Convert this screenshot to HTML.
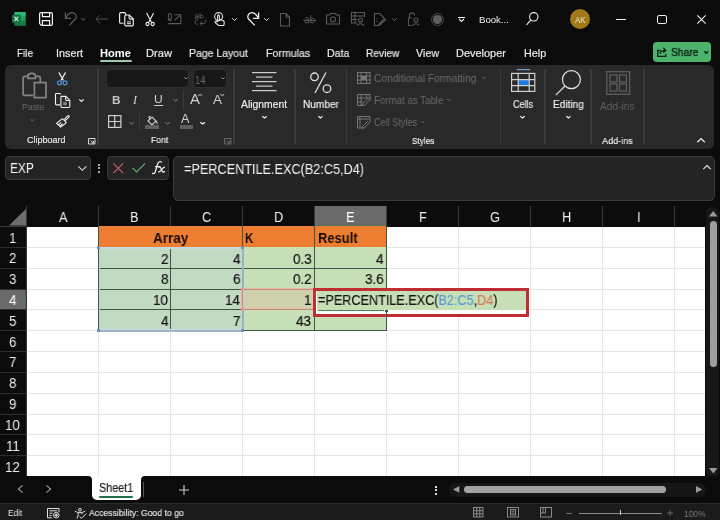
<!DOCTYPE html>
<html><head><meta charset="utf-8">
<style>
*{margin:0;padding:0;box-sizing:border-box}
html,body{width:720px;height:520px;overflow:hidden;background:#0b0b0b;font-family:"Liberation Sans",sans-serif;color:#fff}
.a{position:absolute}
.t{position:absolute;white-space:nowrap;line-height:1;will-change:transform}
svg{position:absolute;overflow:visible}
</style></head><body>
<!-- ============ TITLE BAR ============ -->
<div id="title">
  <!-- excel logo -->
  <svg style="left:11.8px;top:12.2px" width="14" height="14" viewBox="0 0 14 14">
    <rect x="2.6" y="0" width="11" height="13.5" rx="0.8" fill="#1f9e5e"/>
    <rect x="2.6" y="0" width="11" height="4.5" fill="#2cb874"/>
    <rect x="2.6" y="9" width="11" height="4.5" fill="#177a45"/>
    <rect x="0" y="2.8" width="8.7" height="8" rx="0.8" fill="#137040"/>
    <path d="M2.4 4.6 L6.3 9.1 M6.3 4.6 L2.4 9.1" stroke="#d9f2e2" stroke-width="1.1"/>
  </svg>
  <!-- save -->
  <svg style="left:39px;top:12px" width="14" height="14" viewBox="0 0 14 14" fill="none" stroke="#f2f2f2" stroke-width="1.2">
    <path d="M1.8 0.6 H12 C12.8 0.6 13.4 1.2 13.4 2 V12.2 C13.4 13 12.8 13.4 12 13.4 H2.4 L0.6 11.6 V1.8 C0.6 1.1 1.1 0.6 1.8 0.6 Z"/>
    <path d="M3.4 0.6 V4.6 H10.6 V0.6"/>
    <path d="M3.4 13.4 V8.6 H10.6 V13.4"/>
  </svg>
  <!-- undo -->
  <svg style="left:64px;top:12px" width="13" height="14" viewBox="0 0 13 14" fill="none" stroke="#5e5e5e" stroke-width="1.2">
    <path d="M5.3 13.4 L11.4 7 C12.8 5.4 12.3 2.6 10.2 1.3 C7.8 -0.1 4.6 0.7 1.8 5.6"/>
    <path d="M1.4 0.6 V6.4 H7"/>
  </svg>
  <svg style="left:81px;top:17.5px" width="4.5" height="2.6" viewBox="0 0 4.5 2.6" fill="none" stroke="#6a6a6a" stroke-width="1"><path d="M0.3 0.3 L2.25 2.2 L4.2 0.3"/></svg>
  <!-- back arrow -->
  <svg style="left:95px;top:13.5px" width="13" height="10" viewBox="0 0 13 10" fill="none" stroke="#585858" stroke-width="0.95">
    <path d="M13 5 H1 M5 0.8 L0.8 5 L5 9.2"/>
  </svg>
  <!-- copy -->
  <svg style="left:118.5px;top:12px" width="15" height="14.5" viewBox="0 0 15 14.5" fill="none" stroke="#f0f0f0" stroke-width="1.15">
    <path d="M4.6 11.2 H1.9 C1.1 11.2 0.6 10.7 0.6 9.9 V1.9 C0.6 1.1 1.1 0.6 1.9 0.6 H5.3 C6.1 0.6 6.7 1.2 6.7 2 V2.9"/>
    <path d="M7 3 H10.3 L14.3 7 V12.7 C14.3 13.4 13.8 13.9 13.1 13.9 H7 C6.3 13.9 5.8 13.4 5.8 12.7 V4.2 C5.8 3.5 6.3 3 7 3 Z"/>
    <path d="M10.1 3.2 V6 C10.1 6.7 10.5 7.1 11.2 7.1 H14.1"/>
    <path d="M8 9.9 H12 M8 11.7 H12" stroke-width="1"/>
  </svg>
  <!-- scissors -->
  <svg style="left:145px;top:12px" width="10" height="14" viewBox="0 0 10 14" fill="none" stroke="#f0f0f0" stroke-width="1.1">
    <path d="M1.6 0.9 L6.6 10.6 M8.6 0.9 L3.6 10.6"/>
    <circle cx="2.5" cy="12" r="1.6"/><circle cx="7.7" cy="12" r="1.6"/>
  </svg>
  <!-- signature -->
  <svg style="left:167px;top:12.5px" width="14.5" height="11.5" viewBox="0 0 14.5 11.5" fill="none" stroke="#595959" stroke-width="1.1">
    <path d="M1 10.6 H13.8 V1.7 H7.5"/><path d="M7.3 7.3 L13.2 2.3"/>
    <path d="M1.4 6 V2.2 C1.4 0 4.4 0 4.4 2.2 V5.2 C4.4 6.5 2.4 6.8 1.4 6 M1.4 6 C1.4 7.2 2.2 7.8 4.6 7.8"/>
  </svg>
  <!-- abc spelling -->
  <svg style="left:193.5px;top:13px" width="12.5" height="12.5" viewBox="0 0 12.5 12.5" fill="none" stroke="#595959" stroke-width="1">
    <path d="M1 2.5 C1.5 1.2 4 1.2 4 2.8 V5.5 M4 3.8 C2.5 3.5 0.8 3.8 0.8 4.7 C0.8 5.8 3 5.8 4 4.6"/>
    <path d="M6 0 V5.5 M6 3.3 C6.5 2 9.2 2 9.2 3.7 C9.2 5.4 6.5 5.4 6 4"/>
    <path d="M4.2 7.6 C3.5 6.8 1 6.8 1 9.2 C1 11.6 3.5 11.6 4.2 10.8"/>
    <path d="M11.8 6.6 V8 C11.8 9.5 10.5 10.5 9 10.5 H6 M8 8.6 L6 10.5 L8 12.4"/>
  </svg>
  <!-- touch hand -->
  <svg style="left:213.5px;top:12px" width="11" height="14" viewBox="0 0 11 14" fill="none" stroke="#e0e0e0" stroke-width="1.1">
    <circle cx="4.6" cy="4.6" r="4"/>
    <path d="M3.6 10 V4 C3.6 2.8 5.4 2.8 5.4 4 V7.5 L8.5 8.3 C10 8.8 10.5 10 10.2 11.5 L9.8 13.5 H4.5 L1.2 10.5 C0.5 9.7 1.5 8.6 2.4 9.2 L3.6 10"/>
  </svg>
  <svg style="left:232px;top:17.5px" width="5" height="3" viewBox="0 0 5 3" fill="none" stroke="#ddd" stroke-width="1"><path d="M0.3 0.3 L2.5 2.5 L4.7 0.3"/></svg>
  <!-- redo -->
  <svg style="left:247px;top:12px" width="13" height="14" viewBox="0 0 13 14" fill="none" stroke="#f0f0f0" stroke-width="1.3">
    <path d="M7.7 13.4 L1.6 7 C0.2 5.4 0.7 2.6 2.8 1.3 C5.2 -0.1 8.4 0.7 11.2 5.6"/>
    <path d="M11.6 0.6 V6.4 H6"/>
  </svg>
  <svg style="left:264px;top:17.5px" width="5" height="3" viewBox="0 0 5 3" fill="none" stroke="#ddd" stroke-width="1"><path d="M0.3 0.3 L2.5 2.5 L4.7 0.3"/></svg>
  <!-- new doc -->
  <svg style="left:280px;top:12.5px" width="10" height="13.5" viewBox="0 0 10 13.5" fill="none" stroke="#5a5a5a" stroke-width="1.1">
    <path d="M0.5 0.5 H6 L9.5 4 V13 H0.5 Z M6 0.5 V4 H9.5"/>
  </svg>
  <!-- strikethrough ab -->
  <svg style="left:302.5px;top:15px" width="14" height="9" viewBox="0 0 14 9" fill="none" stroke="#595959" stroke-width="1">
    <path d="M0 5.3 H13.6"/>
    <path d="M2.2 3.3 C2.6 2.1 5.6 2.1 5.6 3.8 V8.3 M5.6 5.2 C4 4.8 1.8 5 1.8 6.6 C1.8 8.4 4.6 8.4 5.6 7"/>
    <path d="M7.8 0 V8.3 M7.8 4.3 C8.4 2.8 11.6 2.8 11.6 5.5 C11.6 8.3 8.4 8.3 7.8 6.8"/>
  </svg>
  <!-- camera -->
  <svg style="left:326px;top:13px" width="14" height="11.5" viewBox="0 0 14 11.5" fill="none" stroke="#5a5a5a" stroke-width="1.1">
    <path d="M0.5 2 H3.5 L4.5 0.5 H9.5 L10.5 2 H13.5 V11 H0.5 Z"/>
    <circle cx="7" cy="6.5" r="2.5"/>
  </svg>
  <!-- table person -->
  <svg style="left:350.5px;top:12px" width="14" height="14" viewBox="0 0 14 14" fill="none" stroke="#5a5a5a" stroke-width="1.1">
    <path d="M6 11 H0.5 V0.5 H13.5 V5 M0.5 4 H13.5 M4 0.5 V11 M0.5 7.5 H6"/>
    <circle cx="9.5" cy="8" r="2"/><path d="M6.2 13.8 C6.5 11 12.5 11 12.8 13.8"/>
  </svg>
  <!-- doc pen -->
  <svg style="left:374px;top:12.5px" width="12" height="13" viewBox="0 0 12 13" fill="none" stroke="#5a5a5a" stroke-width="1.1">
    <path d="M5 12.5 H0.5 V0.5 H5.5 L10 5"/><path d="M11.5 6.5 L6 12 L4.5 12.5 L5 11 L10.5 5.5 Z"/>
    <path d="M2.5 6 H3.5 M2.5 8.5 H3.5"/>
  </svg>
  <svg style="left:392px;top:17.5px" width="5" height="3" viewBox="0 0 5 3" fill="none" stroke="#666" stroke-width="1"><path d="M0.3 0.3 L2.5 2.5 L4.7 0.3"/></svg>
  <!-- lock person -->
  <svg style="left:407.5px;top:12px" width="12" height="14" viewBox="0 0 12 14" fill="none" stroke="#555" stroke-width="1.1">
    <path d="M1.5 6 V3.5 C1.5 0 6.5 0 6.5 3.5 M4 13.5 H0.5 V6 H4"/>
    <circle cx="8" cy="8" r="2"/><path d="M5 13.8 C5.3 11 10.7 11 11 13.8"/>
  </svg>
  <!-- record -->
  <svg style="left:430.5px;top:12.5px" width="13" height="13" viewBox="0 0 13 13">
    <circle cx="6.5" cy="6.5" r="6" fill="none" stroke="#4a4a4a" stroke-width="1"/>
    <circle cx="6.5" cy="6.5" r="4.6" fill="#5e5e5e"/>
  </svg>
  <!-- customize -->
  <svg style="left:457.5px;top:17px" width="7" height="5" viewBox="0 0 7 5" fill="none" stroke="#f0f0f0" stroke-width="1.1">
    <path d="M0 0.5 H7 M1 2 L3.5 4.5 L6 2"/>
  </svg>
  <!-- search -->
  <svg style="left:526px;top:12px" width="13" height="13.5" viewBox="0 0 13 13.5" fill="none" stroke="#f0f0f0" stroke-width="1.1">
    <circle cx="7.8" cy="4.8" r="4.2"/><path d="M4.8 7.8 L0.5 13"/>
  </svg>
  <!-- avatar -->
  <div class="a" style="left:569.8px;top:8.9px;width:20.6px;height:20.6px;border-radius:50%;background:#a07a18"></div>
  <!-- window controls -->
  <div class="a" style="left:615.5px;top:18.5px;width:10px;height:1px;background:#f0f0f0"></div>
  <div class="a" style="left:657px;top:15px;width:9.5px;height:9px;border:1.2px solid #f0f0f0;border-radius:2px"></div>
  <svg style="left:697px;top:15px" width="9" height="9" viewBox="0 0 9 9" fill="none" stroke="#f0f0f0" stroke-width="1.1"><path d="M0.3 0.3 L8.7 8.7 M8.7 0.3 L0.3 8.7"/></svg>
</div>

<!-- ============ TABS ============ -->
<div class="a" style="left:99.7px;top:60px;width:32px;height:2px;background:#a3c9ad;border-radius:1px"></div>
<!-- share -->
<div class="a" style="left:653px;top:42px;width:58px;height:20px;background:#4cb26c;border-radius:4px"></div>
<svg style="left:657px;top:47px" width="10" height="10" viewBox="0 0 10 10" fill="none" stroke="#0c2413" stroke-width="1.3">
  <path d="M3.5 3.5 H0.7 V9.3 H8.8 V7"/><path d="M3 7 C3.2 4.5 5 3.3 8.5 3.3 M6.3 0.8 L8.8 3.3 L6.3 5.8"/>
</svg>
<svg style="left:704px;top:50.5px" width="4.5" height="3" viewBox="0 0 4.5 3" fill="none" stroke="#0c2413" stroke-width="1.4"><path d="M0.3 0.3 L2.25 2.3 L4.2 0.3"/></svg>

<div class="t" style="left:478.50px;top:15.00px;font-size:9.6px;letter-spacing:0.000px;color:#f0f0f0;transform:scaleX(0.9865);transform-origin:0.00px 0;">Book...</div>
<div class="t" style="left:574.80px;top:15.00px;font-size:9.6px;letter-spacing:0.000px;color:#f5ecd2;transform:scaleX(0.8115);transform-origin:0.00px 0;">AK</div>
<div class="t" style="left:17.00px;top:48.00px;font-size:10.8px;letter-spacing:0.000px;color:#e8e8e8;-webkit-text-stroke:0.2px #e8e8e8;transform:scaleX(0.9202);transform-origin:0.00px 0;">File</div>
<div class="t" style="left:55.50px;top:48.00px;font-size:10.8px;letter-spacing:0.000px;color:#e8e8e8;-webkit-text-stroke:0.2px #e8e8e8;transform:scaleX(1.0000);transform-origin:0.00px 0;">Insert</div>
<div class="t" style="left:146.00px;top:48.00px;font-size:10.8px;letter-spacing:0.000px;color:#e8e8e8;-webkit-text-stroke:0.2px #e8e8e8;transform:scaleX(1.0310);transform-origin:0.00px 0;">Draw</div>
<div class="t" style="left:188.75px;top:48.00px;font-size:10.8px;letter-spacing:0.000px;color:#e8e8e8;-webkit-text-stroke:0.2px #e8e8e8;transform:scaleX(0.9688);transform-origin:0.00px 0;">Page Layout</div>
<div class="t" style="left:265.75px;top:48.00px;font-size:10.8px;letter-spacing:0.000px;color:#e8e8e8;-webkit-text-stroke:0.2px #e8e8e8;transform:scaleX(0.9825);transform-origin:0.00px 0;">Formulas</div>
<div class="t" style="left:327.00px;top:48.00px;font-size:10.8px;letter-spacing:0.000px;color:#e8e8e8;-webkit-text-stroke:0.2px #e8e8e8;transform:scaleX(0.9850);transform-origin:0.00px 0;">Data</div>
<div class="t" style="left:365.50px;top:48.00px;font-size:10.8px;letter-spacing:0.000px;color:#e8e8e8;-webkit-text-stroke:0.2px #e8e8e8;transform:scaleX(0.9457);transform-origin:0.00px 0;">Review</div>
<div class="t" style="left:416.00px;top:48.00px;font-size:10.8px;letter-spacing:0.000px;color:#e8e8e8;-webkit-text-stroke:0.2px #e8e8e8;transform:scaleX(0.9905);transform-origin:0.00px 0;">View</div>
<div class="t" style="left:456.00px;top:48.00px;font-size:10.8px;letter-spacing:0.000px;color:#e8e8e8;-webkit-text-stroke:0.2px #e8e8e8;transform:scaleX(1.0153);transform-origin:0.00px 0;">Developer</div>
<div class="t" style="left:523.75px;top:48.00px;font-size:10.8px;letter-spacing:0.000px;color:#e8e8e8;-webkit-text-stroke:0.2px #e8e8e8;">Help</div>
<div class="t" style="left:100.00px;top:48.00px;font-size:10.8px;letter-spacing:0.000px;color:#fff;font-weight:bold;transform:scaleX(1.0325);transform-origin:0.00px 0;">Home</div>
<div class="t" style="left:670.60px;top:47.00px;font-size:11px;letter-spacing:0.000px;color:#0c2413;-webkit-text-stroke:0.35px #0c2413;transform:scaleX(0.9329);transform-origin:0.00px 0;">Share</div>
<div class="a" style="left:5px;top:65px;width:709px;height:83.5px;background:#292929;border-radius:6px;"></div>
<div class="a" style="left:97.2px;top:68px;width:1.6px;height:77px;background:#3a3a3a;"></div>
<div class="a" style="left:182.7px;top:90px;width:1.6px;height:20px;background:#3a3a3a;"></div>
<div class="a" style="left:138.7px;top:112px;width:1.6px;height:20px;background:#3a3a3a;"></div>
<div class="a" style="left:233.2px;top:68.5px;width:1.6px;height:75.0px;background:#3a3a3a;"></div>
<div class="a" style="left:294.2px;top:68.5px;width:1.6px;height:75.0px;background:#3a3a3a;"></div>
<div class="a" style="left:345.7px;top:68.5px;width:1.6px;height:75.0px;background:#3a3a3a;"></div>
<div class="a" style="left:499.59999999999997px;top:68.5px;width:1.6px;height:75.0px;background:#3a3a3a;"></div>
<div class="a" style="left:544.4000000000001px;top:68.5px;width:1.6px;height:75.0px;background:#3a3a3a;"></div>
<div class="a" style="left:590.2px;top:68.5px;width:1.6px;height:75.0px;background:#3a3a3a;"></div>
<div class="a" style="left:643.4000000000001px;top:68.5px;width:1.6px;height:75.0px;background:#3a3a3a;"></div>
<svg style="left:22px;top:71.5px" width="25" height="26.5" viewBox="0 0 25 26.5" fill="none" stroke="#858585" stroke-width="1.7">
<path d="M11.2 23.4 H3 C1.9 23.4 1.1 22.6 1.1 21.5 V6.3 C1.1 5.2 1.9 4.4 3 4.4 H6"/><path d="M13.4 4.4 H16.4 C17.5 4.4 18.3 5.2 18.3 6.3 V10"/>
<path d="M6 6.3 V3.3 C6 2.6 6.5 2.1 7.2 2.1 H7.9 C8.2 0.6 11.4 0.6 11.6 2.1 H12.3 C13 2.1 13.4 2.6 13.4 3.3 V6.3 Z"/>
<rect x="12.4" y="10.6" width="11.6" height="15"/></svg>
<div class="t" style="left:21.70px;top:102.00px;font-size:9.6px;letter-spacing:0.000px;color:#6a6a6a;transform:scaleX(0.9092);transform-origin:0.00px 0;">Paste</div>
<svg style="left:30px;top:118.7px" width="4.700000000000003" height="2.5" viewBox="0 0 4.700000000000003 2.5" fill="none" stroke="#6a6a6a" stroke-width="1.0"><path d="M0.3 0.3 L2.3500000000000014 2.0 L4.400000000000003 0.3"/></svg>
<svg style="left:57px;top:71.8px" width="10.5" height="13.5" viewBox="0 0 10.5 13.5" fill="none" stroke-width="1.2">
<path d="M1.8 0.4 L6.4 8.4 M8.6 0.4 L4 8.4" stroke="#e8e8e8"/>
<circle cx="2.5" cy="10.8" r="2" stroke="#4f93d8"/><circle cx="8" cy="10.8" r="2" stroke="#4f93d8"/></svg>
<svg style="left:54.5px;top:92.5px" width="15.5" height="15" viewBox="0 0 15.5 15" fill="none" stroke="#f0f0f0" stroke-width="1.1">
<path d="M5.5 1.5 V1.4 C5.5 0.9 5.1 0.5 4.6 0.5 H1.4 C0.9 0.5 0.5 0.9 0.5 1.4 V11 C0.5 11.5 0.9 11.9 1.4 11.9 H5"/>
<path d="M6.8 3.4 H10.8 L14.8 7.4 V13.6 C14.8 14.1 14.4 14.5 13.9 14.5 H6.8 C6.3 14.5 5.9 14.1 5.9 13.6 V4.3 C5.9 3.8 6.3 3.4 6.8 3.4 Z"/>
<path d="M10.6 3.6 V6.6 C10.6 7.1 11 7.5 11.5 7.5 H14.6"/>
<rect x="8.2" y="9.2" width="3.6" height="3" fill="#8a8a8a" stroke="none"/></svg>
<svg style="left:79px;top:99px" width="5" height="3" viewBox="0 0 5 3" fill="none" stroke="#f0f0f0" stroke-width="1.2"><path d="M0.3 0.3 L2.5 2.5 L4.7 0.3"/></svg>
<svg style="left:55.5px;top:115px" width="13.5" height="12.5" viewBox="0 0 13.5 12.5" fill="none" stroke="#f0f0f0" stroke-width="1.1">
<path d="M8.2 4.6 L11.6 0.9 C12 0.5 12.7 0.5 13 0.9 C13.3 1.3 13.2 1.8 12.9 2.1 L9.3 5.6"/><path d="M6.4 3.6 L10.2 7.4 L9 8.8"/>
<path d="M6.4 3.6 L0.6 8.2 L4.6 12 L9 8.8"/><path d="M2.6 9.8 L5.2 7.4 M4.2 11 L6.6 8.8"/></svg>
<div class="t" style="left:26.70px;top:136.00px;font-size:9.0px;letter-spacing:0.000px;color:#f0f0f0;-webkit-text-stroke:0.15px #f0f0f0;transform:scaleX(0.9969);transform-origin:0.00px 0;">Clipboard</div>
<svg style="left:87.5px;top:137.5px" width="7.5" height="6.5" viewBox="0 0 7.5 6.5" fill="none" stroke="#d8d8d8" stroke-width="1">
<path d="M0.5 6 V0.5 H7 V6 Z"/><path d="M2.5 2.5 L5.5 5 M5.5 3 V5 H3.5"/></svg>
<div class="a" style="left:105.7px;top:68.8px;width:83.7px;height:18.8px;background:#171717;border-radius:4px;border:1px solid #303030;"></div>
<svg style="left:183.5px;top:77px" width="4.0" height="2.5" viewBox="0 0 4.0 2.5" fill="none" stroke="#8a8a8a" stroke-width="1.0"><path d="M0.3 0.3 L2.0 2.0 L3.7 0.3"/></svg>
<div class="a" style="left:192.7px;top:68.8px;width:34.6px;height:18.8px;background:#171717;border-radius:4px;border:1px solid #303030;"></div>
<div class="t" style="left:194.60px;top:75.00px;font-size:11.5px;letter-spacing:0.000px;color:#6a6a6a;transform:scaleX(0.8147);transform-origin:0.00px 0;">14</div>
<svg style="left:221px;top:77px" width="4" height="2.5" viewBox="0 0 4 2.5" fill="none" stroke="#8a8a8a" stroke-width="1.0"><path d="M0.3 0.3 L2.0 2.0 L3.7 0.3"/></svg>
<div class="t" style="left:112.00px;top:95.00px;font-size:11.8px;letter-spacing:0.000px;color:#c4c4c4;font-weight:bold;">B</div>
<div class="t" style="left:133.2px;top:93.5px;font-size:12px;font-style:italic;font-family:'Liberation Serif';color:#d0d0d0">I</div>
<div class="t" style="left:154.30px;top:94.00px;font-size:11.5px;letter-spacing:0.000px;color:#d0d0d0;transform:scaleX(1.0507);transform-origin:0.00px 0;">U</div>
<div class="a" style="left:154.3px;top:104.5px;width:8.7px;height:1.1px;background:#d0d0d0;"></div>
<svg style="left:172.8px;top:99.2px" width="4.899999999999977" height="2.5" viewBox="0 0 4.899999999999977 2.5" fill="none" stroke="#8a8a8a" stroke-width="1.0"><path d="M0.3 0.3 L2.4499999999999886 2.0 L4.599999999999977 0.3"/></svg>
<div class="t" style="left:190.00px;top:92.00px;font-size:14.5px;letter-spacing:0.000px;color:#d0d0d0;transform:scaleX(1.0293);transform-origin:0.00px 0;">A</div>
<svg style="left:198px;top:94px" width="4.5" height="2" viewBox="0 0 4.5 2" fill="none" stroke="#d0d0d0" stroke-width="1.0"><path d="M0.3 1.7 L2.25 0.5 L4.2 1.7"/></svg>
<div class="t" style="left:212.70px;top:93.00px;font-size:13px;letter-spacing:0.000px;color:#d0d0d0;transform:scaleX(1.0333);transform-origin:0.00px 0;">A</div>
<svg style="left:220px;top:94px" width="4.5" height="2" viewBox="0 0 4.5 2" fill="none" stroke="#d0d0d0" stroke-width="1.0"><path d="M0.3 0.3 L2.25 1.5 L4.2 0.3"/></svg>
<svg style="left:108px;top:115px" width="13.5" height="13" viewBox="0 0 13.5 13" fill="none" stroke="#cfcfcf" stroke-width="1.2">
<rect x="0.6" y="0.6" width="12.3" height="11.8"/><path d="M6.75 0.6 V12.4 M0.6 6.5 H12.9"/></svg>
<svg style="left:129px;top:121.5px" width="5" height="2.5" viewBox="0 0 5 2.5" fill="none" stroke="#8a8a8a" stroke-width="1.0"><path d="M0.3 0.3 L2.5 2.0 L4.7 0.3"/></svg>
<svg style="left:145px;top:115.5px" width="14" height="14" viewBox="0 0 14 14" fill="none" stroke="#d0d0d0" stroke-width="1.1">
<path d="M3 5 L7 1 L11 5 L7 9 Z"/><path d="M5 3 L4 1.5 C3.5 0.5 5 0 5.5 1"/><path d="M11 5 C12 6 12.5 7 12 8"/></svg>
<div class="a" style="left:145px;top:124.5px;width:13.8px;height:4px;background:#5f5f5f;"></div>
<svg style="left:165.4px;top:121.5px" width="5.099999999999994" height="2.5" viewBox="0 0 5.099999999999994 2.5" fill="none" stroke="#8a8a8a" stroke-width="1.0"><path d="M0.3 0.3 L2.549999999999997 2.0 L4.7999999999999945 0.3"/></svg>
<div class="t" style="left:181.20px;top:113.00px;font-size:12.5px;letter-spacing:0.000px;color:#d0d0d0;transform:scaleX(1.0149);transform-origin:0.00px 0;">A</div>
<div class="a" style="left:179.6px;top:124.5px;width:13.6px;height:4px;background:#5f5f5f;"></div>
<svg style="left:199.7px;top:121.5px" width="5.300000000000011" height="2.5" viewBox="0 0 5.300000000000011 2.5" fill="none" stroke="#f0f0f0" stroke-width="1.3"><path d="M0.3 0.3 L2.6500000000000057 2.0 L5.0000000000000115 0.3"/></svg>
<div class="t" style="left:151.00px;top:136.00px;font-size:9.2px;letter-spacing:0.000px;color:#f0f0f0;-webkit-text-stroke:0.15px #f0f0f0;transform:scaleX(0.9402);transform-origin:0.00px 0;">Font</div>
<svg style="left:223.5px;top:137.8px" width="7.5" height="6.5" viewBox="0 0 7.5 6.5" fill="none" stroke="#6a6a6a" stroke-width="1">
<path d="M0.5 6 V0.5 H7 V6 Z"/><path d="M2.5 2.5 L5.5 5 M5.5 3 V5 H3.5"/></svg>
<svg style="left:252px;top:72px" width="24.5" height="19" viewBox="0 0 24.5 19" fill="#cfcfcf">
<rect x="0" y="0" width="24.5" height="1.2"/><rect x="4" y="4.5" width="16.5" height="1.2"/><rect x="0" y="9" width="24.5" height="1.2"/>
<rect x="4" y="13.5" width="16.5" height="1.2"/><rect x="0" y="18" width="24.5" height="1.2"/></svg>
<div class="t" style="left:241.20px;top:100.00px;font-size:10.2px;letter-spacing:0.000px;color:#f0f0f0;-webkit-text-stroke:0.15px #f0f0f0;transform:scaleX(1.0168);transform-origin:0.00px 0;">Alignment</div>
<svg style="left:261.6px;top:115.9px" width="5.0" height="2.5" viewBox="0 0 5.0 2.5" fill="none" stroke="#f0f0f0" stroke-width="1.2"><path d="M0.3 0.3 L2.5 2.0 L4.7 0.3"/></svg>
<svg style="left:310px;top:71.5px" width="21.5" height="21.5" viewBox="0 0 21.5 21.5" fill="none" stroke="#e0e0e0" stroke-width="1.3">
<circle cx="4.5" cy="4.8" r="3.8"/><circle cx="17" cy="16.7" r="3.8"/><path d="M16 0.5 L5 21"/></svg>
<div class="t" style="left:302.60px;top:100.00px;font-size:10.2px;letter-spacing:0.000px;color:#f0f0f0;-webkit-text-stroke:0.15px #f0f0f0;transform:scaleX(0.9900);transform-origin:0.00px 0;">Number</div>
<svg style="left:317.8px;top:115.9px" width="4.800000000000011" height="2.5" viewBox="0 0 4.800000000000011 2.5" fill="none" stroke="#f0f0f0" stroke-width="1.2"><path d="M0.3 0.3 L2.4000000000000057 2.0 L4.5000000000000115 0.3"/></svg>
<svg style="left:356.5px;top:72px" width="13.5" height="12" viewBox="0 0 13.5 12" fill="none" stroke="#777" stroke-width="1">
<rect x="0.5" y="0.5" width="12.5" height="11"/><path d="M4 0.5 V11.5 M9.5 0.5 V11.5 M0.5 4 H13 M0.5 8 H13"/><rect x="4.5" y="4.5" width="4.5" height="3" fill="#777"/></svg>
<svg style="left:356.5px;top:94.3px" width="13.5" height="12" viewBox="0 0 13.5 12" fill="none" stroke="#777" stroke-width="1">
<path d="M7 11.5 H0.5 V0.5 H13 V6"/><path d="M4 0.5 V11.5 M9.5 0.5 V4 M0.5 4 H13 M0.5 8 H6"/><path d="M13 5.5 L7.5 11.5 H5.5 V10 L11 4.5"/></svg>
<svg style="left:356.5px;top:115.8px" width="13.5" height="12.5" viewBox="0 0 13.5 12.5" fill="none" stroke="#777" stroke-width="1">
<path d="M7 12 H0.5 V0.5 H13 V6"/><path d="M0.5 3 H13 M3 0.5 V12"/><path d="M13 6 L7.5 12 H5.5 V10.5 L11 5"/></svg>
<div class="t" style="left:373.75px;top:74.00px;font-size:10.3px;letter-spacing:0.000px;color:#6a6a6a;transform:scaleX(0.9892);transform-origin:0.00px 0;">Conditional Formatting</div>
<svg style="left:481.5px;top:77px" width="3.5" height="2" viewBox="0 0 3.5 2" fill="none" stroke="#6a6a6a" stroke-width="1.0"><path d="M0.3 0.3 L1.75 1.5 L3.2 0.3"/></svg>
<div class="t" style="left:373.75px;top:96.00px;font-size:10.3px;letter-spacing:0.000px;color:#6a6a6a;transform:scaleX(0.9403);transform-origin:0.00px 0;">Format as Table</div>
<svg style="left:447px;top:98.5px" width="3.8000000000000114" height="2.0" viewBox="0 0 3.8000000000000114 2.0" fill="none" stroke="#6a6a6a" stroke-width="1.0"><path d="M0.3 0.3 L1.9000000000000057 1.5 L3.5000000000000115 0.3"/></svg>
<div class="t" style="left:373.75px;top:118.00px;font-size:10.3px;letter-spacing:0.000px;color:#6a6a6a;transform:scaleX(0.8866);transform-origin:0.00px 0;">Cell Styles</div>
<svg style="left:421px;top:120.5px" width="3.6000000000000227" height="2.0" viewBox="0 0 3.6000000000000227 2.0" fill="none" stroke="#6a6a6a" stroke-width="1.0"><path d="M0.3 0.3 L1.8000000000000114 1.5 L3.300000000000023 0.3"/></svg>
<div class="t" style="left:411.70px;top:136.00px;font-size:9.4px;letter-spacing:0.000px;color:#f0f0f0;-webkit-text-stroke:0.15px #f0f0f0;transform:scaleX(0.8784);transform-origin:0.00px 0;">Styles</div>
<svg style="left:510.8px;top:67.8px" width="24.5" height="24" viewBox="0 0 24.5 24" fill="none" stroke="#d0d0d0" stroke-width="1.2">
<path d="M5.8 1.6 H19.2" stroke="#6f9bc8" stroke-width="1.3"/>
<rect x="7.2" y="11.6" width="11" height="6" fill="#1f7ae0" stroke="none"/>
<rect x="0.6" y="5.4" width="23.2" height="18"/><path d="M0.6 11.6 H23.8 M0.6 17.6 H23.8 M7.2 5.4 V23.4 M18.2 5.4 V23.4"/></svg>
<div class="t" style="left:512.50px;top:100.00px;font-size:10.2px;letter-spacing:0.000px;color:#f0f0f0;-webkit-text-stroke:0.15px #f0f0f0;transform:scaleX(0.8901);transform-origin:0.00px 0;">Cells</div>
<svg style="left:520px;top:115.75px" width="5" height="2.5" viewBox="0 0 5 2.5" fill="none" stroke="#f0f0f0" stroke-width="1.2"><path d="M0.3 0.3 L2.5 2.0 L4.7 0.3"/></svg>
<svg style="left:555px;top:69.5px" width="26" height="26" viewBox="0 0 26 26" fill="none" stroke="#e0e0e0" stroke-width="1.2">
<circle cx="16.4" cy="9.6" r="9"/><path d="M10 16 L0.8 25.2"/></svg>
<div class="t" style="left:552.50px;top:100.00px;font-size:10.2px;letter-spacing:0.000px;color:#f0f0f0;-webkit-text-stroke:0.15px #f0f0f0;transform:scaleX(0.9868);transform-origin:0.00px 0;">Editing</div>
<svg style="left:566px;top:115.75px" width="4.7999999999999545" height="2.5" viewBox="0 0 4.7999999999999545 2.5" fill="none" stroke="#f0f0f0" stroke-width="1.2"><path d="M0.3 0.3 L2.3999999999999773 2.0 L4.499999999999955 0.3"/></svg>
<svg style="left:605.5px;top:71.3px" width="24.5" height="24" viewBox="0 0 24.5 24" fill="none" stroke="#5e5e5e" stroke-width="1.3">
<rect x="0.7" y="0.7" width="23" height="22.6"/><rect x="4" y="4" width="7" height="7"/><rect x="13.5" y="4" width="7" height="7"/>
<rect x="4" y="13" width="7" height="7"/><rect x="13.5" y="13" width="7" height="7"/></svg>
<div class="t" style="left:600.40px;top:102.00px;font-size:10.2px;letter-spacing:0.000px;color:#5e5e5e;transform:scaleX(0.9949);transform-origin:0.00px 0;">Add-ins</div>
<div class="t" style="left:602.00px;top:137.00px;font-size:9.2px;letter-spacing:0.000px;color:#f0f0f0;-webkit-text-stroke:0.15px #f0f0f0;transform:scaleX(0.9844);transform-origin:0.00px 0;">Add-ins</div>
<svg style="left:696.5px;top:137.8px" width="8.100000000000023" height="4.599999999999994" viewBox="0 0 8.100000000000023 4.599999999999994" fill="none" stroke="#f0f0f0" stroke-width="1.2"><path d="M0.3 4.2999999999999945 L4.050000000000011 0.5 L7.800000000000023 4.2999999999999945"/></svg>
<div class="a" style="left:5px;top:156px;width:86px;height:24px;background:#242424;border:1px solid #3b3b3b;border-radius:4px;"></div>
<div class="t" style="left:9.50px;top:161.00px;font-size:14px;letter-spacing:0.000px;color:#f2f2f2;transform:scaleX(0.8500);transform-origin:0.00px 0;">EXP</div>
<svg style="left:77.6px;top:166.2px" width="8.700000000000003" height="4.800000000000011" viewBox="0 0 8.700000000000003 4.800000000000011" fill="none" stroke="#d8d8d8" stroke-width="1.1"><path d="M0.3 0.3 L4.350000000000001 4.300000000000011 L8.400000000000002 0.3"/></svg>
<div class="a" style="left:98.3px;top:163.5px;width:2px;height:2px;background:#e0e0e0;border-radius:1px;"></div>
<div class="a" style="left:98.3px;top:167px;width:2px;height:2px;background:#e0e0e0;border-radius:1px;"></div>
<div class="a" style="left:98.3px;top:170.5px;width:2px;height:2px;background:#e0e0e0;border-radius:1px;"></div>
<div class="a" style="left:107.2px;top:156px;width:62.2px;height:24px;background:#242424;border:1px solid #3b3b3b;border-radius:4px;"></div>
<svg style="left:112.8px;top:162.8px" width="10.5" height="10.5" viewBox="0 0 10.5 10.5" fill="none" stroke="#d4606a" stroke-width="1.1">
<path d="M0.4 0.4 L10.1 10.1 M10.1 0.4 L0.4 10.1"/></svg>
<svg style="left:131.7px;top:162.8px" width="13.5" height="9.5" viewBox="0 0 13.5 9.5" fill="none" stroke="#5fb070" stroke-width="1.1">
<path d="M0.4 4.8 L4.6 9 L13.1 0.4"/></svg>
<svg style="left:150px;top:159px" width="16" height="16" viewBox="0 0 16 16" fill="none" stroke="#f2f2f2" stroke-width="1.25" stroke-linecap="round">
<path d="M2.6 14.2 C3.6 15 4.6 14.6 5.2 13 L7.6 5 C8.2 3 9.6 2.2 11.6 3"/><path d="M5.6 7.6 H9.8"/>
<path d="M9 8 C10 7.8 10.6 8.4 11 9.5 L12.2 12.3 C12.6 13.2 13.4 13.4 14.6 12.6"/><path d="M14.4 8.2 C13.4 8.6 12 10 10.8 11.6 C10 12.6 9.4 13 8.6 12.8"/></svg>
<div class="a" style="left:172.5px;top:156px;width:542px;height:45px;background:#242424;border:1px solid #3b3b3b;border-radius:5px;"></div>
<div class="t" style="left:184.00px;top:162.00px;font-size:14.5px;letter-spacing:0.000px;color:#f2f2f2;transform:scaleX(0.8742);transform-origin:0.00px 0;">=PERCENTILE.EXC(B2:C5,D4)</div>
<svg style="left:703px;top:165px" width="8" height="4.5" viewBox="0 0 8 4.5" fill="none" stroke="#e8e8e8" stroke-width="1.1"><path d="M0.3 4.2 L4.0 0.5 L7.7 4.2"/></svg>
<div class="a" style="left:0px;top:206px;width:705px;height:20px;background:#0c0c0c;"></div>
<svg style="left:8.5px;top:208.5px" width="17" height="16.5" viewBox="0 0 17 16.5"><path d="M17 0 V16.5 H0 Z" fill="#6e6e6e"/></svg>
<div class="a" style="left:26px;top:206px;width:1px;height:21px;background:#3a3a3a;"></div>
<div class="a" style="left:0px;top:226px;width:27px;height:1px;background:#3a3a3a;"></div>
<div class="a" style="left:27px;top:227px;width:678px;height:249px;background:#ffffff;"></div>
<div class="a" style="left:98px;top:227px;width:1px;height:249px;background:#e5e5e5;"></div>
<div class="a" style="left:170px;top:227px;width:1px;height:249px;background:#e5e5e5;"></div>
<div class="a" style="left:242px;top:227px;width:1px;height:249px;background:#e5e5e5;"></div>
<div class="a" style="left:314px;top:227px;width:1px;height:249px;background:#e5e5e5;"></div>
<div class="a" style="left:386px;top:227px;width:1px;height:249px;background:#e5e5e5;"></div>
<div class="a" style="left:458px;top:227px;width:1px;height:249px;background:#e5e5e5;"></div>
<div class="a" style="left:530px;top:227px;width:1px;height:249px;background:#e5e5e5;"></div>
<div class="a" style="left:602px;top:227px;width:1px;height:249px;background:#e5e5e5;"></div>
<div class="a" style="left:674px;top:227px;width:1px;height:249px;background:#e5e5e5;"></div>
<div class="a" style="left:27px;top:247px;width:678px;height:1px;background:#e5e5e5;"></div>
<div class="a" style="left:27px;top:268px;width:678px;height:1px;background:#e5e5e5;"></div>
<div class="a" style="left:27px;top:289px;width:678px;height:1px;background:#e5e5e5;"></div>
<div class="a" style="left:27px;top:309px;width:678px;height:1px;background:#e5e5e5;"></div>
<div class="a" style="left:27px;top:330px;width:678px;height:1px;background:#e5e5e5;"></div>
<div class="a" style="left:27px;top:351px;width:678px;height:1px;background:#e5e5e5;"></div>
<div class="a" style="left:27px;top:372px;width:678px;height:1px;background:#e5e5e5;"></div>
<div class="a" style="left:27px;top:393px;width:678px;height:1px;background:#e5e5e5;"></div>
<div class="a" style="left:27px;top:414px;width:678px;height:1px;background:#e5e5e5;"></div>
<div class="a" style="left:27px;top:434px;width:678px;height:1px;background:#e5e5e5;"></div>
<div class="a" style="left:27px;top:455px;width:678px;height:1px;background:#e5e5e5;"></div>
<div class="t" style="left:58.73px;top:210.00px;font-size:14.5px;letter-spacing:0.000px;color:#ececec;transform:scaleX(0.8800);transform-origin:0.00px 0;">A</div>
<div class="t" style="left:130.26px;top:210.00px;font-size:14.5px;letter-spacing:0.000px;color:#ececec;transform:scaleX(0.8800);transform-origin:0.00px 0;">B</div>
<div class="a" style="left:98px;top:206px;width:1px;height:20px;background:#3a3a3a;"></div>
<div class="t" style="left:201.91px;top:210.00px;font-size:14.5px;letter-spacing:0.000px;color:#ececec;transform:scaleX(0.8800);transform-origin:0.00px 0;">C</div>
<div class="a" style="left:170px;top:206px;width:1px;height:20px;background:#3a3a3a;"></div>
<div class="t" style="left:273.91px;top:210.00px;font-size:14.5px;letter-spacing:0.000px;color:#ececec;transform:scaleX(0.8800);transform-origin:0.00px 0;">D</div>
<div class="a" style="left:242px;top:206px;width:1px;height:20px;background:#3a3a3a;"></div>
<div class="a" style="left:314px;top:206px;width:73px;height:20px;background:#6b6b6b;"></div>
<div class="a" style="left:314px;top:224.5px;width:73px;height:1.5px;background:#4f735c;"></div>
<div class="t" style="left:346.26px;top:210.00px;font-size:14.5px;letter-spacing:0.000px;color:#ffffff;transform:scaleX(0.8800);transform-origin:0.00px 0;">E</div>
<div class="a" style="left:314px;top:206px;width:1px;height:20px;background:#3a3a3a;"></div>
<div class="t" style="left:418.61px;top:210.00px;font-size:14.5px;letter-spacing:0.000px;color:#ececec;transform:scaleX(0.8800);transform-origin:0.00px 0;">F</div>
<div class="a" style="left:386px;top:206px;width:1px;height:20px;background:#3a3a3a;"></div>
<div class="t" style="left:489.52px;top:210.00px;font-size:14.5px;letter-spacing:0.000px;color:#ececec;transform:scaleX(0.8800);transform-origin:0.00px 0;">G</div>
<div class="a" style="left:458px;top:206px;width:1px;height:20px;background:#3a3a3a;"></div>
<div class="t" style="left:561.91px;top:210.00px;font-size:14.5px;letter-spacing:0.000px;color:#ececec;transform:scaleX(0.8800);transform-origin:0.00px 0;">H</div>
<div class="a" style="left:530px;top:206px;width:1px;height:20px;background:#3a3a3a;"></div>
<div class="t" style="left:636.71px;top:210.00px;font-size:14.5px;letter-spacing:0.000px;color:#ececec;transform:scaleX(0.8800);transform-origin:0.00px 0;">I</div>
<div class="a" style="left:602px;top:206px;width:1px;height:20px;background:#3a3a3a;"></div>
<div class="a" style="left:674px;top:206px;width:1px;height:20px;background:#3a3a3a;"></div>
<div class="a" style="left:0px;top:227px;width:26px;height:249px;background:#0c0c0c;"></div>
<div class="t" style="left:9.10px;top:231.00px;font-size:14.5px;letter-spacing:0.000px;color:#ececec;transform:scaleX(0.9200);transform-origin:0.00px 0;">1</div>
<div class="t" style="left:9.10px;top:251.00px;font-size:14.5px;letter-spacing:0.000px;color:#ececec;transform:scaleX(0.9200);transform-origin:0.00px 0;">2</div>
<div class="a" style="left:0px;top:247px;width:26px;height:1px;background:#2e2e2e;"></div>
<div class="t" style="left:9.10px;top:272.00px;font-size:14.5px;letter-spacing:0.000px;color:#ececec;transform:scaleX(0.9200);transform-origin:0.00px 0;">3</div>
<div class="a" style="left:0px;top:268px;width:26px;height:1px;background:#2e2e2e;"></div>
<div class="a" style="left:0px;top:289px;width:26px;height:21px;background:#6b6b6b;"></div>
<div class="a" style="left:0px;top:289px;width:26px;height:1px;background:#8a8a8a;"></div>
<div class="a" style="left:0px;top:309px;width:26px;height:1px;background:#8a8a8a;"></div>
<div class="a" style="left:25px;top:289px;width:2px;height:21px;background:#456b55;"></div>
<div class="t" style="left:9.10px;top:293.00px;font-size:14.5px;letter-spacing:0.000px;color:#ffffff;transform:scaleX(0.9200);transform-origin:0.00px 0;">4</div>
<div class="a" style="left:0px;top:289px;width:26px;height:1px;background:#2e2e2e;"></div>
<div class="t" style="left:9.10px;top:314.00px;font-size:14.5px;letter-spacing:0.000px;color:#ececec;transform:scaleX(0.9200);transform-origin:0.00px 0;">5</div>
<div class="a" style="left:0px;top:309px;width:26px;height:1px;background:#2e2e2e;"></div>
<div class="t" style="left:9.10px;top:335.00px;font-size:14.5px;letter-spacing:0.000px;color:#ececec;transform:scaleX(0.9200);transform-origin:0.00px 0;">6</div>
<div class="a" style="left:0px;top:330px;width:26px;height:1px;background:#2e2e2e;"></div>
<div class="t" style="left:9.10px;top:355.00px;font-size:14.5px;letter-spacing:0.000px;color:#ececec;transform:scaleX(0.9200);transform-origin:0.00px 0;">7</div>
<div class="a" style="left:0px;top:351px;width:26px;height:1px;background:#2e2e2e;"></div>
<div class="t" style="left:9.10px;top:376.00px;font-size:14.5px;letter-spacing:0.000px;color:#ececec;transform:scaleX(0.9200);transform-origin:0.00px 0;">8</div>
<div class="a" style="left:0px;top:372px;width:26px;height:1px;background:#2e2e2e;"></div>
<div class="t" style="left:9.10px;top:397.00px;font-size:14.5px;letter-spacing:0.000px;color:#ececec;transform:scaleX(0.9200);transform-origin:0.00px 0;">9</div>
<div class="a" style="left:0px;top:393px;width:26px;height:1px;background:#2e2e2e;"></div>
<div class="t" style="left:5.40px;top:418.00px;font-size:14.5px;letter-spacing:0.000px;color:#ececec;transform:scaleX(0.9200);transform-origin:0.00px 0;">10</div>
<div class="a" style="left:0px;top:414px;width:26px;height:1px;background:#2e2e2e;"></div>
<div class="t" style="left:5.86px;top:439.00px;font-size:14.5px;letter-spacing:0.000px;color:#ececec;transform:scaleX(0.9200);transform-origin:0.00px 0;">11</div>
<div class="a" style="left:0px;top:434px;width:26px;height:1px;background:#2e2e2e;"></div>
<div class="t" style="left:5.40px;top:460.00px;font-size:14.5px;letter-spacing:0.000px;color:#ececec;transform:scaleX(0.9200);transform-origin:0.00px 0;">12</div>
<div class="a" style="left:0px;top:455px;width:26px;height:1px;background:#2e2e2e;"></div>
<div class="a" style="left:26px;top:227px;width:1px;height:249px;background:#3a3a3a;"></div>
<div class="a" style="left:98px;top:226px;width:288px;height:21px;background:#ed7d31;"></div>
<div class="a" style="left:98px;top:247px;width:288px;height:84px;background:#c6dfb6;"></div>
<div class="a" style="left:98px;top:247px;width:145px;height:84px;background:#c2dac2;"></div>
<div class="a" style="left:170px;top:247px;width:1px;height:84px;background:#3d5742;"></div>
<div class="a" style="left:242px;top:226px;width:1px;height:105px;background:#3d5742;"></div>
<div class="a" style="left:314px;top:226px;width:1px;height:105px;background:#3d5742;"></div>
<div class="a" style="left:386px;top:226px;width:1px;height:105px;background:#3d5742;"></div>
<div class="a" style="left:98px;top:268px;width:288px;height:1px;background:#3d5742;"></div>
<div class="a" style="left:98px;top:289px;width:288px;height:1px;background:#3d5742;"></div>
<div class="a" style="left:98px;top:309px;width:288px;height:1px;background:#3d5742;"></div>
<div class="a" style="left:98px;top:330px;width:288px;height:1px;background:#3d5742;"></div>
<div class="a" style="left:98px;top:226px;width:1px;height:105px;background:#3d5742;"></div>
<div class="a" style="left:243px;top:290px;width:71px;height:18px;background:#cfd1ad;"></div>
<div class="t" style="left:153.30px;top:231.00px;font-size:14.5px;letter-spacing:0.000px;color:#1a0d05;font-weight:bold;transform:scaleX(0.9336);transform-origin:0.00px 0;">Array</div>
<div class="t" style="left:245.20px;top:231.00px;font-size:14.5px;letter-spacing:0.000px;color:#1a0d05;font-weight:bold;transform:scaleX(0.7950);transform-origin:0.00px 0;">K</div>
<div class="t" style="left:318.10px;top:231.00px;font-size:14.5px;letter-spacing:0.000px;color:#1a0d05;font-weight:bold;transform:scaleX(0.8940);transform-origin:0.00px 0;">Result</div>
<div class="t" style="left:160.52px;top:252.00px;font-size:14.5px;letter-spacing:0.000px;color:#141414;-webkit-text-stroke:0.2px #141414;transform:scaleX(0.9300);transform-origin:0.00px 0;">2</div>
<div class="t" style="left:232.52px;top:252.00px;font-size:14.5px;letter-spacing:0.000px;color:#141414;-webkit-text-stroke:0.2px #141414;transform:scaleX(0.9300);transform-origin:0.00px 0;">4</div>
<div class="t" style="left:292.56px;top:252.00px;font-size:14.5px;letter-spacing:0.000px;color:#141414;-webkit-text-stroke:0.2px #141414;transform:scaleX(0.9300);transform-origin:0.00px 0;">0.3</div>
<div class="t" style="left:376.32px;top:252.00px;font-size:14.5px;letter-spacing:0.000px;color:#141414;-webkit-text-stroke:0.2px #141414;transform:scaleX(0.9300);transform-origin:0.00px 0;">4</div>
<div class="t" style="left:160.52px;top:272.00px;font-size:14.5px;letter-spacing:0.000px;color:#141414;-webkit-text-stroke:0.2px #141414;transform:scaleX(0.9300);transform-origin:0.00px 0;">8</div>
<div class="t" style="left:232.52px;top:272.00px;font-size:14.5px;letter-spacing:0.000px;color:#141414;-webkit-text-stroke:0.2px #141414;transform:scaleX(0.9300);transform-origin:0.00px 0;">6</div>
<div class="t" style="left:292.56px;top:272.00px;font-size:14.5px;letter-spacing:0.000px;color:#141414;-webkit-text-stroke:0.2px #141414;transform:scaleX(0.9300);transform-origin:0.00px 0;">0.2</div>
<div class="t" style="left:365.06px;top:272.00px;font-size:14.5px;letter-spacing:0.000px;color:#141414;-webkit-text-stroke:0.2px #141414;transform:scaleX(0.9300);transform-origin:0.00px 0;">3.6</div>
<div class="t" style="left:153.03px;top:293.00px;font-size:14.5px;letter-spacing:0.000px;color:#141414;-webkit-text-stroke:0.2px #141414;transform:scaleX(0.9300);transform-origin:0.00px 0;">10</div>
<div class="t" style="left:225.03px;top:293.00px;font-size:14.5px;letter-spacing:0.000px;color:#141414;-webkit-text-stroke:0.2px #141414;transform:scaleX(0.9300);transform-origin:0.00px 0;">14</div>
<div class="t" style="left:303.82px;top:293.00px;font-size:14.5px;letter-spacing:0.000px;color:#141414;-webkit-text-stroke:0.2px #141414;transform:scaleX(0.9300);transform-origin:0.00px 0;">1</div>
<div class="t" style="left:160.52px;top:314.00px;font-size:14.5px;letter-spacing:0.000px;color:#141414;-webkit-text-stroke:0.2px #141414;transform:scaleX(0.9300);transform-origin:0.00px 0;">4</div>
<div class="t" style="left:232.52px;top:314.00px;font-size:14.5px;letter-spacing:0.000px;color:#141414;-webkit-text-stroke:0.2px #141414;transform:scaleX(0.9300);transform-origin:0.00px 0;">7</div>
<div class="t" style="left:296.33px;top:314.00px;font-size:14.5px;letter-spacing:0.000px;color:#141414;-webkit-text-stroke:0.2px #141414;transform:scaleX(0.9300);transform-origin:0.00px 0;">43</div>
<div class="a" style="left:99px;top:247px;width:144px;height:1.5px;background:#c2dae6;"></div>
<div class="a" style="left:99px;top:248px;width:1px;height:82px;background:#bcd6e4;"></div>
<div class="a" style="left:242px;top:247px;width:2px;height:84px;background:#93b3c6;"></div>
<div class="a" style="left:98px;top:329px;width:146px;height:1px;background:#c9dde2;"></div>
<div class="a" style="left:98px;top:330px;width:146px;height:1.5px;background:#a2b3c6;"></div>
<div class="a" style="left:97px;top:246px;width:3px;height:3px;background:#7890b0;"></div>
<div class="a" style="left:241px;top:246px;width:3px;height:3px;background:#7890b0;"></div>
<div class="a" style="left:97px;top:329px;width:3px;height:3px;background:#7890b0;"></div>
<div class="a" style="left:241px;top:329px;width:3px;height:3px;background:#7890b0;"></div>
<div class="a" style="left:241px;top:288px;width:73px;height:1px;background:#e8b8aa;"></div>
<div class="a" style="left:241px;top:289px;width:73px;height:1px;background:#c08b7b;"></div>
<div class="a" style="left:241px;top:308px;width:73px;height:1px;background:#e8b8aa;"></div>
<div class="a" style="left:241px;top:309px;width:73px;height:1px;background:#c08b7b;"></div>
<div class="a" style="left:241px;top:288px;width:1px;height:23px;background:#e8b8aa;"></div>
<div class="a" style="left:242px;top:288px;width:1px;height:23px;background:#c08b7b;"></div>
<div class="a" style="left:243px;top:290px;width:1px;height:18px;background:#e6c8ba;"></div>
<div class="a" style="left:240.5px;top:287.5px;width:3px;height:3px;background:#e49a94;"></div>
<div class="a" style="left:240.5px;top:308px;width:3px;height:3px;background:#e49a94;"></div>
<div class="a" style="left:313.2px;top:288.2px;width:215.8px;height:28.6px;background:#ffffff;border:3px solid #bf2d32;border-left-width:3.6px;"></div>
<div class="a" style="left:316.8px;top:291.2px;width:209px;height:18.8px;background:#c6dfb6;"></div>
<div class="a" style="left:318px;top:309.5px;width:66px;height:1.5px;background:#4a8a5a;"></div>
<div class="a" style="left:385px;top:309.5px;width:3px;height:2px;background:#2f5a3c;"></div>
<div class="a" style="left:386px;top:311px;width:1px;height:6px;background:#3d5742;"></div>
<div class="t" style="left:318.00px;top:293.00px;font-size:14.5px;letter-spacing:0.000px;color:#141414;-webkit-text-stroke:0.15px currentColor;transform:scaleX(0.8718);transform-origin:0.00px 0;">=PERCENTILE.EXC(<span style="color:#5a9ad4">B2:C5</span>,<span style="color:#dc7660">D4</span>)</div>
<div class="a" style="left:705px;top:206px;width:15px;height:271px;background:#0b0b0b;"></div>
<div class="a" style="left:706px;top:207px;width:13px;height:270px;background:#171717;border-radius:6px;"></div>
<svg style="left:709px;top:211px" width="8.5" height="5.5" viewBox="0 0 8.5 5.5"><path d="M4.25 0 L8.5 5.5 H0 Z" fill="#9a9a9a"/></svg>
<svg style="left:709px;top:468px" width="8.5" height="5.5" viewBox="0 0 8.5 5.5"><path d="M0 0 H8.5 L4.25 5.5 Z" fill="#9a9a9a"/></svg>
<div class="a" style="left:709.8px;top:221px;width:7.4px;height:145.5px;background:#9e9e9e;border-radius:3.7px;"></div>
<div class="a" style="left:0px;top:476px;width:720px;height:27.5px;background:#0b0b0b;"></div>
<svg style="left:18px;top:485px" width="5" height="8" viewBox="0 0 5 8" fill="none" stroke="#9a9a9a" stroke-width="1.1"><path d="M4.7 0.3 L0.3 4 L4.7 7.7"/></svg>
<svg style="left:46px;top:485px" width="5" height="8" viewBox="0 0 5 8" fill="none" stroke="#9a9a9a" stroke-width="1.1"><path d="M0.3 0.3 L4.7 4 L0.3 7.7"/></svg>
<div class="a" style="left:87.5px;top:476px;width:4px;height:4px;background:#ffffff;"></div>
<div class="a" style="left:141px;top:476px;width:4px;height:4px;background:#ffffff;"></div>
<div class="a" style="left:83.5px;top:476px;width:8px;height:8px;background:#0b0b0b;border-radius:50%;"></div>
<div class="a" style="left:141px;top:476px;width:8px;height:8px;background:#0b0b0b;border-radius:50%;"></div>
<div class="a" style="left:91.5px;top:476px;width:49.5px;height:24px;background:#ffffff;border-radius:0 0 5px 5px;"></div>
<div class="t" style="left:98.70px;top:482.00px;font-size:12px;letter-spacing:0.000px;color:#1e1e1e;-webkit-text-stroke:0.2px #1e1e1e;transform:scaleX(0.9017);transform-origin:0.00px 0;">Sheet1</div>
<div class="a" style="left:98.5px;top:495.5px;width:34.5px;height:2.2px;background:#21704a;border-radius:1px;"></div>
<div class="a" style="left:143px;top:482px;width:1px;height:15px;background:#555555;"></div>
<svg style="left:179px;top:484.5px" width="10" height="10" viewBox="0 0 10 10" fill="none" stroke="#cfcfcf" stroke-width="1.1"><path d="M5 0 V10 M0 5 H10"/></svg>
<div class="a" style="left:434.6px;top:486px;width:2.4px;height:2.2px;background:#eeeeee;border-radius:0.5px;"></div>
<div class="a" style="left:434.6px;top:489.3px;width:2.4px;height:2.2px;background:#eeeeee;border-radius:0.5px;"></div>
<div class="a" style="left:434.6px;top:492.6px;width:2.4px;height:2.2px;background:#eeeeee;border-radius:0.5px;"></div>
<div class="a" style="left:449px;top:483.3px;width:257px;height:13.5px;background:#161616;border-radius:7px;"></div>
<svg style="left:453.3px;top:486.4px" width="6.3" height="6.8" viewBox="0 0 6.3 6.8"><path d="M0 3.4 L6.3 0 V6.8 Z" fill="#9a9a9a"/></svg>
<svg style="left:696px;top:486.4px" width="6.3" height="6.8" viewBox="0 0 6.3 6.8"><path d="M6.3 3.4 L0 0 V6.8 Z" fill="#9a9a9a"/></svg>
<div class="a" style="left:463.75px;top:486px;width:202px;height:7px;background:#a3a3a3;border-radius:3.5px;"></div>
<div class="a" style="left:0px;top:503px;width:720px;height:17px;background:#1b1b1b;"></div>
<div class="a" style="left:0px;top:502.5px;width:720px;height:1px;background:#2b2b2b;"></div>
<div class="t" style="left:8.30px;top:509.00px;font-size:9.2px;letter-spacing:0.000px;color:#e6e6e6;transform:scaleX(0.8948);transform-origin:0.00px 0;">Edit</div>
<svg style="left:47px;top:508px" width="13" height="10.5" viewBox="0 0 13 10.5" fill="none" stroke="#e0e0e0" stroke-width="1">
<path d="M12 4.2 V0.5 H0.5 V9.8 H5.2"/><path d="M2.4 2.8 H10.2 M2.4 5.2 H5.4 M2.4 7.5 H4.6"/><circle cx="9.2" cy="7.2" r="2.8"/><circle cx="9.2" cy="7.2" r="1.1" fill="#e0e0e0"/></svg>
<svg style="left:74px;top:507.5px" width="13" height="11" viewBox="0 0 13 11" fill="none" stroke="#e0e0e0" stroke-width="1">
<circle cx="6" cy="1.8" r="1.4"/><path d="M0.8 3 C2.5 4.3 4 4.6 6 4.6 C8 4.6 9.5 4.3 11.2 3"/><path d="M4.2 4.6 V7.2 L3 10.6 M7.8 4.6 V6.2"/><path d="M5.6 8.6 L7.4 10.4 L12.2 5.6"/></svg>
<div class="t" style="left:89.20px;top:508.00px;font-size:9.8px;letter-spacing:0.000px;color:#e6e6e6;-webkit-text-stroke:0.15px #e6e6e6;transform:scaleX(0.8834);transform-origin:0.00px 0;">Accessibility: Good to go</div>
<svg style="left:473px;top:507.3px" width="10.5" height="10.5" viewBox="0 0 10.5 10.5" fill="none" stroke="#8a8a8a" stroke-width="1">
<rect x="0.5" y="0.5" width="9.5" height="9.5"/><path d="M3.7 0.5 V10 M6.8 0.5 V10 M0.5 3.7 H10 M0.5 6.8 H10"/></svg>
<svg style="left:507px;top:507.3px" width="12" height="10.5" viewBox="0 0 12 10.5" fill="none" stroke="#8a8a8a" stroke-width="1">
<rect x="0.5" y="0.5" width="11" height="9.5"/><rect x="3.5" y="2.5" width="5" height="5.5"/><path d="M4.5 4.2 H7.5 M4.5 6.2 H7.5"/></svg>
<svg style="left:540.4px;top:507.3px" width="12" height="10.5" viewBox="0 0 12 10.5" fill="none" stroke="#8a8a8a" stroke-width="1">
<rect x="0.5" y="0.5" width="11" height="9.5"/><path d="M0.5 6 H5.5 V0.5 M3 0.5 V6"/></svg>
<div class="a" style="left:566px;top:512.5px;width:6px;height:1px;background:#6a6a6a;"></div>
<div class="a" style="left:578.75px;top:512.5px;width:83.5px;height:1.2px;background:#8a8a8a;"></div>
<div class="a" style="left:620px;top:510.4px;width:1.2px;height:4.8px;background:#cfcfcf;"></div>
<svg style="left:667px;top:510px" width="6" height="6" viewBox="0 0 6 6" fill="none" stroke="#6a6a6a" stroke-width="1"><path d="M3 0 V6 M0 3 H6"/></svg>
<div class="t" style="left:684.20px;top:510.00px;font-size:8.8px;letter-spacing:0.000px;color:#7a7a7a;transform:scaleX(0.9588);transform-origin:0.00px 0;">100%</div>
</body></html>
